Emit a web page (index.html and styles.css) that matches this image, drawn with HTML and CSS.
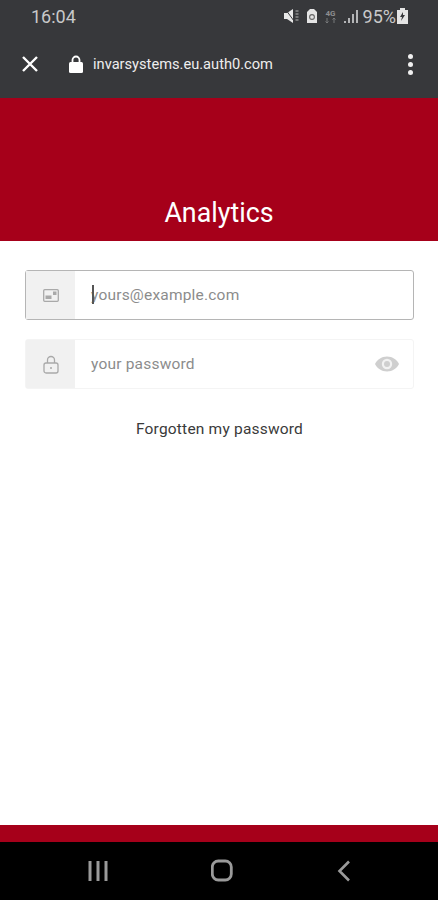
FILE: index.html
```html
<!DOCTYPE html>
<html lang="en">
<head>
    <meta charset="UTF-8">
    <meta name="viewport" content="width=device-width, initial-scale=1.0">
    <title>Analytics</title>
    <link rel="stylesheet" href="styles.css">
</head>
<body>
    <div class="phone">
        <div class="status-bar">
            <span class="clock">16:04</span>
            <div class="status-icons">
                <svg width="16" height="14" viewBox="0 0 16 14"><path d="M0 4h3l6-4v14l-6-4H0z" fill="#e8e8e8"/><path d="M2 1l8 11" stroke="#37383b" stroke-width="1"/><path d="M11.500 2h3M11.500 5h3M11.500 8h3M11.500 11h3" stroke="#b5b5b5" stroke-width="1.200"/></svg>
                <svg width="12" height="16" viewBox="0 0 12 16"><path d="M1 4l3-3h4l3 3v11H1z" fill="#e4e4e4"/><circle cx="6" cy="9" r="2.400" fill="none" stroke="#666" stroke-width="1.100"/></svg>
                <svg width="13" height="15" viewBox="0 0 13 15"><text x="6.500" y="7" class="net-type">4G</text><path d="M3 9v5M1.500 12.500L3 14l1.500-1.500M10 14V9M8.500 10.500L10 9l1.500 1.500" fill="none" stroke="#77787a" stroke-width="1"/></svg>
                <svg width="16" height="15" viewBox="0 0 16 15"><path d="M1 12h2v2H1zM5 9h2v5H5zM9 5h2v9H9zM13 1h2v13h-2z" fill="#b4b5b7"/></svg>
                <span class="battery-text">95%</span>
                <svg width="11" height="16" viewBox="0 0 11 16"><path d="M3 2V0h5v2h3v14H0V2z" fill="#e4e4e4"/><path d="M6 4L3 9h2l-1 4 4-6H6z" fill="#37383b"/></svg>
            </div>
        </div>
        <div class="browser-bar">
            <svg width="18" height="18" viewBox="0 0 18 18"><path d="M2 2l14 14M16 2L2 16" stroke="#fff" stroke-width="2.400"/></svg>
            <svg class="lock-icon" width="14" height="18" viewBox="0 0 14 18"><path d="M3.500 7V5a3.500 3.500 0 0 1 7 0v2" fill="none" stroke="#fff" stroke-width="1.800"/><rect y="7" width="14" height="11" rx="1.500" fill="#fff"/></svg>
            <span class="url">invarsystems.eu.auth0.com</span>
            <div class="menu-dots"><i></i><i></i><i></i></div>
        </div>
        <div class="header">
            <h1>Analytics</h1>
        </div>
        <div class="content">
            <div class="field field-focus">
                <div class="field-icon">
                    <svg width="16" height="13" viewBox="0 0 16 13"><rect x="0.700" y="0.700" width="14.600" height="11.600" rx="1" fill="none" stroke="#a9a9a9" stroke-width="1.300"/><rect x="2.500" y="6.500" width="6" height="3.500" fill="#a9a9a9"/><rect x="10" y="2.500" width="3.500" height="3.500" fill="#a9a9a9"/></svg>
                </div>
                <div class="field-input"><span class="caret"></span><span class="placeholder">yours@example.com</span></div>
            </div>
            <div class="field">
                <div class="field-icon">
                    <svg width="16" height="19" viewBox="0 0 16 19"><path d="M4.500 8V5a3.500 3.500 0 0 1 7 0v3" fill="none" stroke="#a9a9a9" stroke-width="1.300"/><rect x="1" y="8" width="14" height="10" rx="2" fill="none" stroke="#a9a9a9" stroke-width="1.300"/><circle cx="8" cy="13" r="1" fill="#a9a9a9"/></svg>
                </div>
                <div class="field-input">
                    <span class="placeholder">your password</span>
                    <svg width="26" height="18" viewBox="0 0 26 18"><path d="M13 1.500C7.500 1.500 3 4.800 1 9c2 4.200 6.500 7.500 12 7.500S23 13.200 25 9c-2-4.200-6.500-7.500-12-7.500z" fill="#cfcfcf"/><circle cx="13" cy="9" r="5.200" fill="#f2f2f2"/><circle cx="13" cy="9" r="3" fill="#cfcfcf"/></svg>
                </div>
            </div>
            <a class="forgot" href="#">Forgotten my password</a>
        </div>
        <div class="footer-strip"></div>
        <div class="nav-bar">
            <svg width="22" height="20" viewBox="0 0 22 20"><path d="M3 0v20M11 0v20M19 0v20" stroke="#9a9a9a" stroke-width="3"/></svg>
            <svg width="24" height="24" viewBox="0 0 24 24"><rect x="1.300" y="2" width="19" height="19" rx="6" fill="none" stroke="#9a9a9a" stroke-width="2.800"/></svg>
            <svg width="14" height="22" viewBox="0 0 14 22"><path d="M12 1.500L2.500 11l9.500 9.500" fill="none" stroke="#9a9a9a" stroke-width="2.600"/></svg>
        </div>
    </div>
</body>
</html>
```

FILE: styles.css
```css
* {
    margin: 0;
    padding: 0;
    box-sizing: border-box;
}

body {
    font-family: Roboto, sans-serif;
    background: #fff;
    overflow: hidden;
}

.phone {
    width: 438px;
    height: 900px;
    display: flex;
    flex-direction: column;
}

.status-bar {
    height: 32px;
    background: #37383b;
    display: flex;
    align-items: center;
    justify-content: space-between;
    padding: 0 30px 0 31px;
    color: #c9c9ca;
}

.clock {
    font-size: 18px;
}

.status-icons {
    display: flex;
    align-items: center;
    gap: 6px;
}

.net-type {
    font-size: 8px;
    font-weight: 700;
    fill: #8d8e90;
    text-anchor: middle;
}

.battery-text {
    font-size: 18px;
    margin-left: -2px;
    margin-right: -5px;
}

.browser-bar {
    height: 66px;
    background: #37383b;
    display: flex;
    align-items: center;
    padding: 0 25px 2px 21px;
}

.lock-icon {
    margin-left: 30px;
}

.url {
    margin-left: 10px;
    font-size: 14.650px;
    color: #eeeeee;
    flex: 1;
}

.menu-dots {
    display: flex;
    flex-direction: column;
    gap: 3px;
}

.menu-dots i {
    width: 5px;
    height: 5px;
    border-radius: 50%;
    background: #f0f0f0;
}

.header {
    height: 143px;
    background: #a6001a;
    display: flex;
    align-items: flex-end;
    justify-content: center;
    padding-bottom: 12px;
}

.header h1 {
    font-size: 26.800px;
    font-weight: 400;
    color: #fff;
}

.content {
    flex: 1;
    display: flex;
    flex-direction: column;
    padding: 29px 24px 0 25px;
    background: #fff;
}

.field {
    height: 50px;
    display: flex;
    border: 1px solid #f4f4f4;
    border-radius: 3px;
    margin-bottom: 19px;
}

.field-focus {
    border: 1.500px solid #b5b5b5;
}

.field-icon {
    width: 49px;
    background: #f1f1f1;
    display: flex;
    align-items: center;
    justify-content: center;
}

.field-input {
    flex: 1;
    display: flex;
    align-items: center;
    justify-content: space-between;
    padding: 0 13px 0 16px;
    position: relative;
}

.placeholder {
    font-size: 15.500px;
    color: #8c8c8c;
    letter-spacing: 0.200px;
}

.caret {
    position: absolute;
    left: 17px;
    top: 14px;
    width: 1.500px;
    height: 19px;
    background: #555;
}

.forgot {
    align-self: center;
    margin-top: 12px;
    font-size: 15.500px;
    color: #3a3a3a;
    text-decoration: none;
    letter-spacing: 0.200px;
}

.footer-strip {
    height: 17px;
    background: #a6001a;
}

.nav-bar {
    height: 58px;
    background: #000;
    display: flex;
    align-items: center;
    justify-content: space-between;
    padding: 0 87px;
}
```
